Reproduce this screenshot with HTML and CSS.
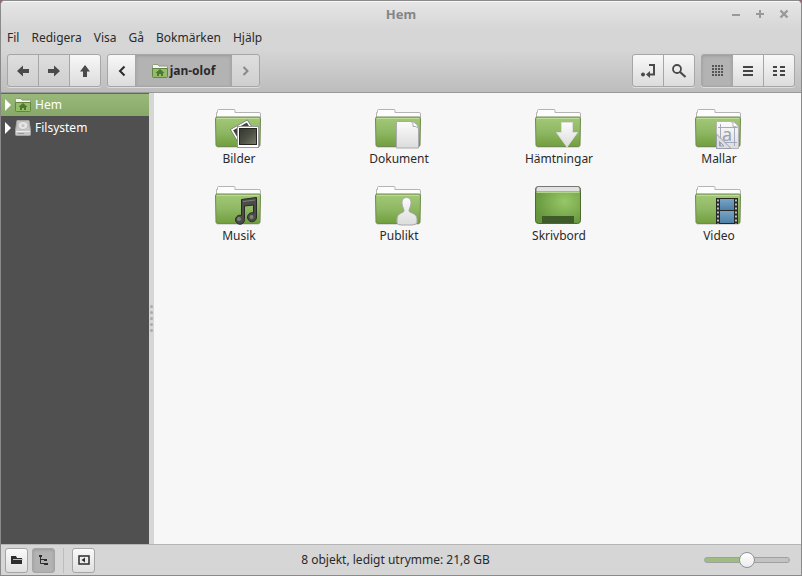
FILE: index.html
```html
<!DOCTYPE html>
<html lang="sv">
<head>
<meta charset="utf-8">
<title>Hem</title>
<link rel="stylesheet" href="styles.css">
</head>
<body>
<svg class="defs" aria-hidden="true">
  <defs>
    <linearGradient id="green" x1="0" y1="0" x2="0" y2="1"><stop offset="0" stop-color="#a3c977"/><stop offset=".5" stop-color="#8fb864"/><stop offset="1" stop-color="#719f3e"/></linearGradient>
    <radialGradient id="desk" cx=".65" cy=".4" r=".7"><stop offset="0" stop-color="#97c767"/><stop offset="1" stop-color="#65953b"/></radialGradient>
    <linearGradient id="dark" x1="0" y1="0" x2="1" y2="1"><stop offset="0" stop-color="#34352f"/><stop offset=".5" stop-color="#4d5045"/><stop offset="1" stop-color="#7a7e6c"/></linearGradient>
    <linearGradient id="paper" x1="0" y1="0" x2="0" y2="1"><stop offset="0" stop-color="#fcfcfc"/><stop offset="1" stop-color="#dcdcdc"/></linearGradient>
    <linearGradient id="film" x1="0" y1="0" x2="0" y2="1"><stop offset="0" stop-color="#77a4c6"/><stop offset="1" stop-color="#4f80a6"/></linearGradient>
    <symbol id="folder" viewBox="0 0 48 42">
      <path d="M1.500 12V3.500H2.500V1.500q0-1 1-1H19q1 0 1 1v2H44q1.500 0 1.500 1.500v7z" fill="#fdfdfd" stroke="#b4b4b4"/>
      <path d="M.5 9.500q0-1.500 1.500-1.500H44q1.500 0 1.500 1.500L45 36q0 1.500-1.500 1.500H2.500Q1 37.500 1 36z" fill="url(#green)" stroke="#728950"/>
      <path d="M2 9.500H44" stroke="#bddb9a"/>
      <path d="M2 38.500H44" stroke="#000" stroke-opacity=".12"/>
    </symbol>
    <symbol id="home-folder" viewBox="0 0 16 14">
      <path d="M.5 5V1.500q0-1 1-1H6L7 2h7.500q1 0 1 1v3" fill="#f4f4f4" stroke="#8e9b7d"/>
      <path d="M.5 4.500h15v8q0 1-1 1h-13q-1 0-1-1z" fill="#94bd68" stroke="#64853f"/>
      <path d="M8 5L3.500 9H5v3h2v-2h2v2h2V9h1.500z" fill="#4e7631"/>
    </symbol>
  </defs>
</svg>
<div class="window">
  <header class="chrome">
    <div class="titlebar">
      <h1>Hem</h1>
      <div class="controls">
        <button type="button" aria-label="Minimera"><svg width="10" height="10"><path d="M1 6H9" stroke="#999" stroke-width="2"/></svg></button>
        <button type="button" aria-label="Maximera"><svg width="10" height="10"><path d="M1 5H9M5 1V9" stroke="#999" stroke-width="2"/></svg></button>
        <button type="button" aria-label="Stäng"><svg width="10" height="10"><path d="M1.500 1.500L8.500 8.500M8.500 1.500L1.500 8.500" stroke="#999" stroke-width="2.400"/></svg></button>
      </div>
    </div>
    <nav class="menubar" aria-label="Meny">
      <button type="button">Fil</button><button type="button">Redigera</button><button type="button">Visa</button><button type="button">Gå</button><button type="button">Bokmärken</button><button type="button">Hjälp</button>
    </nav>
    <div class="toolbar">
      <div class="group">
        <button type="button" class="muted" aria-label="Bakåt"><svg width="14" height="14"><path d="M1 7L7 1.500V5h6v4H7v3.500z" fill="#4a4a4a"/></svg></button>
        <button type="button" class="muted" aria-label="Framåt"><svg width="14" height="14"><path d="M13 7L7 1.500V5H1v4h6v3.500z" fill="#4a4a4a"/></svg></button>
        <button type="button" aria-label="Upp"><svg width="14" height="14"><path d="M7 1L12 7.500H9V13H5V7.500H2z" fill="#4a4a4a"/></svg></button>
      </div>
      <div class="group path">
        <button type="button" aria-label="Föregående mapp"><svg width="10" height="12"><path d="M7.500 1.500L3 6l4.500 4.500" fill="none" stroke="#2a2a2a" stroke-width="2"/></svg></button>
        <button type="button" class="current pressed"><svg width="16" height="14"><use href="#home-folder"/></svg>jan-olof</button>
        <button type="button" class="muted" aria-label="Nästa mapp"><svg width="10" height="12"><path d="M2.500 2L6.500 6l-4 4" fill="none" stroke="#888" stroke-width="2"/></svg></button>
      </div>
      <div class="group end">
        <button type="button" aria-label="Visa sökväg"><svg width="16" height="16"><circle cx="3" cy="11.500" r="2" fill="#4a4a4a"/><path d="M9 2h5v9.500H8" fill="none" stroke="#4a4a4a" stroke-width="2"/><path d="M6 11.500L10 8v7z" fill="#4a4a4a"/></svg></button>
        <button type="button" aria-label="Sök"><svg width="16" height="16"><circle cx="6" cy="6" r="4" fill="none" stroke="#4a4a4a" stroke-width="1.800"/><path d="M9 9l5.500 5" stroke="#4a4a4a" stroke-width="2.200"/></svg></button>
      </div>
      <div class="group">
        <button type="button" class="pressed" aria-label="Ikonvy"><svg width="11" height="11"><path d="M0 1H11M0 4H11M0 7H11M0 10H11" stroke="#555" stroke-width="2" stroke-dasharray="2 1"/></svg></button>
        <button type="button" aria-label="Listvy"><svg width="12" height="12"><path d="M1 2H11M1 6H11M1 10H11" stroke="#444" stroke-width="2"/></svg></button>
        <button type="button" aria-label="Kompakt vy"><svg width="14" height="12"><path d="M1 2H5M8 2h5M1 6H5M8 6h5M1 10H5M8 10h5" stroke="#444" stroke-width="2"/></svg></button>
      </div>
    </div>
  </header>
  <div class="content">
    <aside class="sidebar">
      <a href="#hem" class="place selected"><svg width="7" height="12"><path d="M0 0l6 6-6 6z" fill="#fff"/></svg><svg width="16" height="14"><use href="#home-folder"/></svg>Hem</a>
      <a href="#filsystem" class="place"><svg width="7" height="12"><path d="M0 0l6 6-6 6z" fill="#fff"/></svg><svg width="16" height="16"><path d="M2 .5h12l1.500 10v4q0 1-1 1h-13q-1 0-1-1v-4z" fill="#c6c6c6" stroke="#a5a5a5"/><ellipse cx="8" cy="5.500" rx="5" ry="4" fill="#e5e5e5" stroke="#bbb"/><circle cx="8" cy="5.500" r="1.500" fill="#c4c4c4"/><path d="M1 11.500H15" stroke="#eee"/><path d="M3 13.500H9" stroke="#999"/></svg>Filsystem</a>
    </aside>
    <div class="splitter"><i></i><i></i><i></i><i></i><i></i></div>
    <main class="files">
      <a href="#bilder"><svg viewBox="0 0 48 42"><use href="#folder"/><path d="M17 21L32 12.500L41 26L26 36z" fill="url(#dark)" stroke="#777" stroke-width="3"/><path d="M17 21L32 12.500L41 26L26 36z" fill="url(#dark)" stroke="#fff" stroke-width="1.500"/><rect x="22.500" y="17.500" width="21" height="21" fill="#fff" stroke="#999"/><rect x="24.500" y="19.500" width="17" height="16" fill="url(#dark)" stroke="#252620"/></svg>Bilder</a>
      <a href="#dokument"><svg viewBox="0 0 48 42"><use href="#folder"/><path d="M21.500 12.500H38l5.500 6v20.500h-22z" fill="url(#paper)" stroke="#aaa"/><path d="M36 12.500q3 2 2 5 3-1 5.500 2-1-6-7.500-7z" fill="#fff" stroke="#aaa"/></svg>Dokument</a>
      <a href="#hamtningar"><svg viewBox="0 0 48 42"><use href="#folder"/><path d="M26.500 13.500h11v10h5L32 38L21.500 23.500h5z" fill="url(#paper)" stroke="#ddd"/></svg>Hämtningar</a>
      <a href="#mallar"><svg viewBox="0 0 48 42"><use href="#folder"/><path d="M21.500 12.500H38l5.500 5v22h-22z" fill="url(#paper)" stroke="#b5b5b5"/><path d="M36 12.500q3 2 2 5 3-1 5.500 2-1-6-7.500-7z" fill="#fff" stroke="#b5b5b5"/><path d="M23 18.500H42M23 33.500H42M25.500 15V37M39.500 18V37" stroke="#a4aabb"/><text x="27" y="32" class="glyph">a</text><path d="M21.500 25L36 39.500H21.500zM24.500 32.500v4.500H29z" fill="#dcdee4" fill-rule="evenodd" stroke="#9a9daa"/></svg>Mallar</a>
      <a href="#musik"><svg viewBox="0 0 48 42"><use href="#folder"/><path d="M26.500 13.500L41.500 11.500V31a4.500 4.500 0 1 1-3-4V19L29.500 20V33.500a4.500 4.500 0 1 1-3-4z" fill="#4b4c49" stroke="#292a28"/><circle cx="24" cy="33" r="2" fill="#80827c"/><circle cx="36.500" cy="31" r="2" fill="#80827c"/><path d="M28 15.500L40 14" stroke="#81837d"/></svg>Musik</a>
      <a href="#publikt"><svg viewBox="0 0 48 42"><use href="#folder"/><path d="M27 16c0-6 9-6 9 0 0 5-2 6-2 9 0 2 8 2 8 8v4q-1.500 2-5 2H26q-3 0-4-2v-4c0-6 7-6 7-8 0-3-2-4-2-9z" fill="url(#paper)" stroke="#aaa"/></svg>Publikt</a>
      <a href="#skrivbord"><svg viewBox="0 0 48 42"><rect x=".5" y=".5" width="45" height="37" rx="3" fill="url(#desk)" stroke="#4e6830"/><path d="M1 6V3q0-2.500 2.500-2.500h39Q45 .5 45 3v3z" fill="#e2e2e2" stroke="#777"/><path d="M1.500 6.500h43" stroke="#b4d68c"/><rect x="7" y="30" width="32" height="7" fill="#3f5b29"/></svg>Skrivbord</a>
      <a href="#video"><svg viewBox="0 0 48 42"><use href="#folder"/><rect x="21" y="12" width="22" height="26" fill="#282828"/><rect x="25" y="13" width="14" height="11" fill="url(#film)"/><rect x="25" y="25" width="14" height="12" fill="url(#film)"/><path d="M23 13.500V38M41 13.500V38" stroke="#bbb" stroke-width="2" stroke-dasharray="2 2"/></svg>Video</a>
    </main>
  </div>
  <footer class="statusbar">
    <button type="button" aria-label="Visa platser"><svg width="12" height="10"><path d="M0 1h5l1 2h5v6H0z" fill="#2d2d2d"/><path d="M2 4.500H12" stroke="#bbb"/></svg></button>
    <button type="button" class="pressed" aria-label="Visa trädvy"><svg width="12" height="12"><path d="M2.500 1V9.500H7M2.500 5.500H7" fill="none" stroke="#2d2d2d"/><path d="M1 2h3M6 6h3M6 10h4" stroke="#2d2d2d" stroke-width="2"/></svg></button>
    <span class="divider"></span>
    <button type="button" aria-label="Dölj sidopanelen"><svg width="12" height="10"><rect x="1" y="1" width="10" height="8" fill="none" stroke="#2d2d2d" stroke-width="1.500"/><path d="M7 2.500v5L3.500 5z" fill="#2d2d2d"/></svg></button>
    <p>8 objekt, ledigt utrymme: 21,8 GB</p>
    <input type="range" min="0" max="100" value="50" aria-label="Zoomnivå">
  </footer>
</div>
</body>
</html>
```

FILE: styles.css
```css
* { box-sizing: border-box; }
body {
  margin: 0;
  background: #8c6c74;
  color: #2a2a2a;
  font: 12px/16px "Noto Sans", sans-serif;
}
button { font: inherit; color: inherit; margin: 0; padding: 0; border: 0; background: none; }
svg { display: block; flex: none; }
a { color: inherit; text-decoration: none; }
.defs { position: absolute; width: 0; height: 0; }
.window {
  display: flex;
  flex-direction: column;
  min-height: 100vh;
  border: 1px solid #8a8a8a;
  border-radius: 5px 5px 0 0;
  overflow: hidden;
  background: #d6d6d6;
}
.chrome {
  border-bottom: 1px solid #999;
  box-shadow: inset 0 1px #f8f8f8;
  background: linear-gradient(#e6e6e6, #d6d6d6 28px, #d6d6d6 48px, #bdbdbd);
}
.titlebar {
  display: grid;
  grid-template-columns: 1fr auto 1fr;
  align-items: center;
  height: 26px;
  padding: 0 12px;
}
h1 { grid-column: 2; margin: 0; font-size: 13px; color: #858585; }
.controls { display: flex; justify-content: flex-end; gap: 14px; }
.menubar { display: flex; gap: 12px; padding: 2px 6px; height: 22px; }
.toolbar { display: flex; gap: 6px; padding: 5px 6px; }
.group {
  display: flex;
  height: 33px;
  border-radius: 3px;
  box-shadow: 0 1px #dedede;
}
.group button {
  display: flex;
  align-items: center;
  justify-content: center;
  width: 32px;
  border: 1px solid #a6a6a6;
  background: linear-gradient(#f8f8f8, #dcdcdc);
}
.group button + button { margin-left: -1px; }
.group button:first-child { border-radius: 3px 0 0 3px; }
.group button:last-child { border-radius: 0 3px 3px 0; }
.group .muted { background: linear-gradient(#dedede, #cfcfcf); }
.group .pressed, .statusbar .pressed {
  background: #b3b3b3;
  box-shadow: inset 0 1px 3px #999;
}
.group.path button { width: 29px; }
.group.path .current { width: 97px; gap: 2px; font-weight: bold; }
.end { margin-left: auto; }
.content { display: flex; flex: 1; }
.sidebar { width: 148px; background: #505050; color: #fff; }
.place { display: flex; align-items: center; height: 23px; padding-left: 4px; }
.place svg:first-child { margin-right: 3px; }
.place svg + svg { margin-right: 4px; }
.selected {
  background: linear-gradient(#9aba7b, #87a868);
  box-shadow: inset 0 1px #606b50;
}
.splitter {
  display: flex;
  flex-direction: column;
  align-items: center;
  justify-content: center;
  gap: 3px;
  width: 5px;
}
.splitter i { width: 3px; height: 3px; border-radius: 2px; background: #aaa; }
.files {
  flex: 1;
  display: grid;
  grid-template-columns: repeat(auto-fill, 160px);
  grid-auto-rows: 77px;
  align-content: start;
  padding: 16px 0 0 5px;
  background: #f7f7f7;
}
.files a { display: flex; flex-direction: column; align-items: center; }
.files svg { width: 48px; height: 42px; }
.glyph { font: 18px "Noto Sans", sans-serif; fill: #9ba1b0; }
.statusbar {
  display: flex;
  align-items: center;
  gap: 4px;
  height: 31px;
  padding: 0 11px 0 4px;
  border-top: 1px solid #b5b5b5;
}
.statusbar button {
  display: flex;
  align-items: center;
  justify-content: center;
  width: 23px;
  height: 25px;
  border: 1px solid #a5a5a5;
  border-radius: 3px;
  background: linear-gradient(#fafafa, #dfdfdf);
}
.divider { width: 1px; height: 25px; margin: 0 4px; background: #bdbdbd; }
.statusbar p { flex: 1; margin: 0 8px 0 0; text-align: center; }
input[type="range"] {
  appearance: none;
  width: 86px;
  height: 16px;
  margin: 0;
  background: none;
}
input[type="range"]::-webkit-slider-runnable-track {
  height: 6px;
  border: 1px solid #a0a0a0;
  border-radius: 3px;
  background: linear-gradient(90deg, #9fbd82 50%, #c3c3c3 50%);
}
input[type="range"]::-webkit-slider-thumb {
  appearance: none;
  width: 16px;
  height: 16px;
  margin-top: -6px;
  border: 1px solid #929292;
  border-radius: 50%;
  background: linear-gradient(#fff, #ececec);
}
```
